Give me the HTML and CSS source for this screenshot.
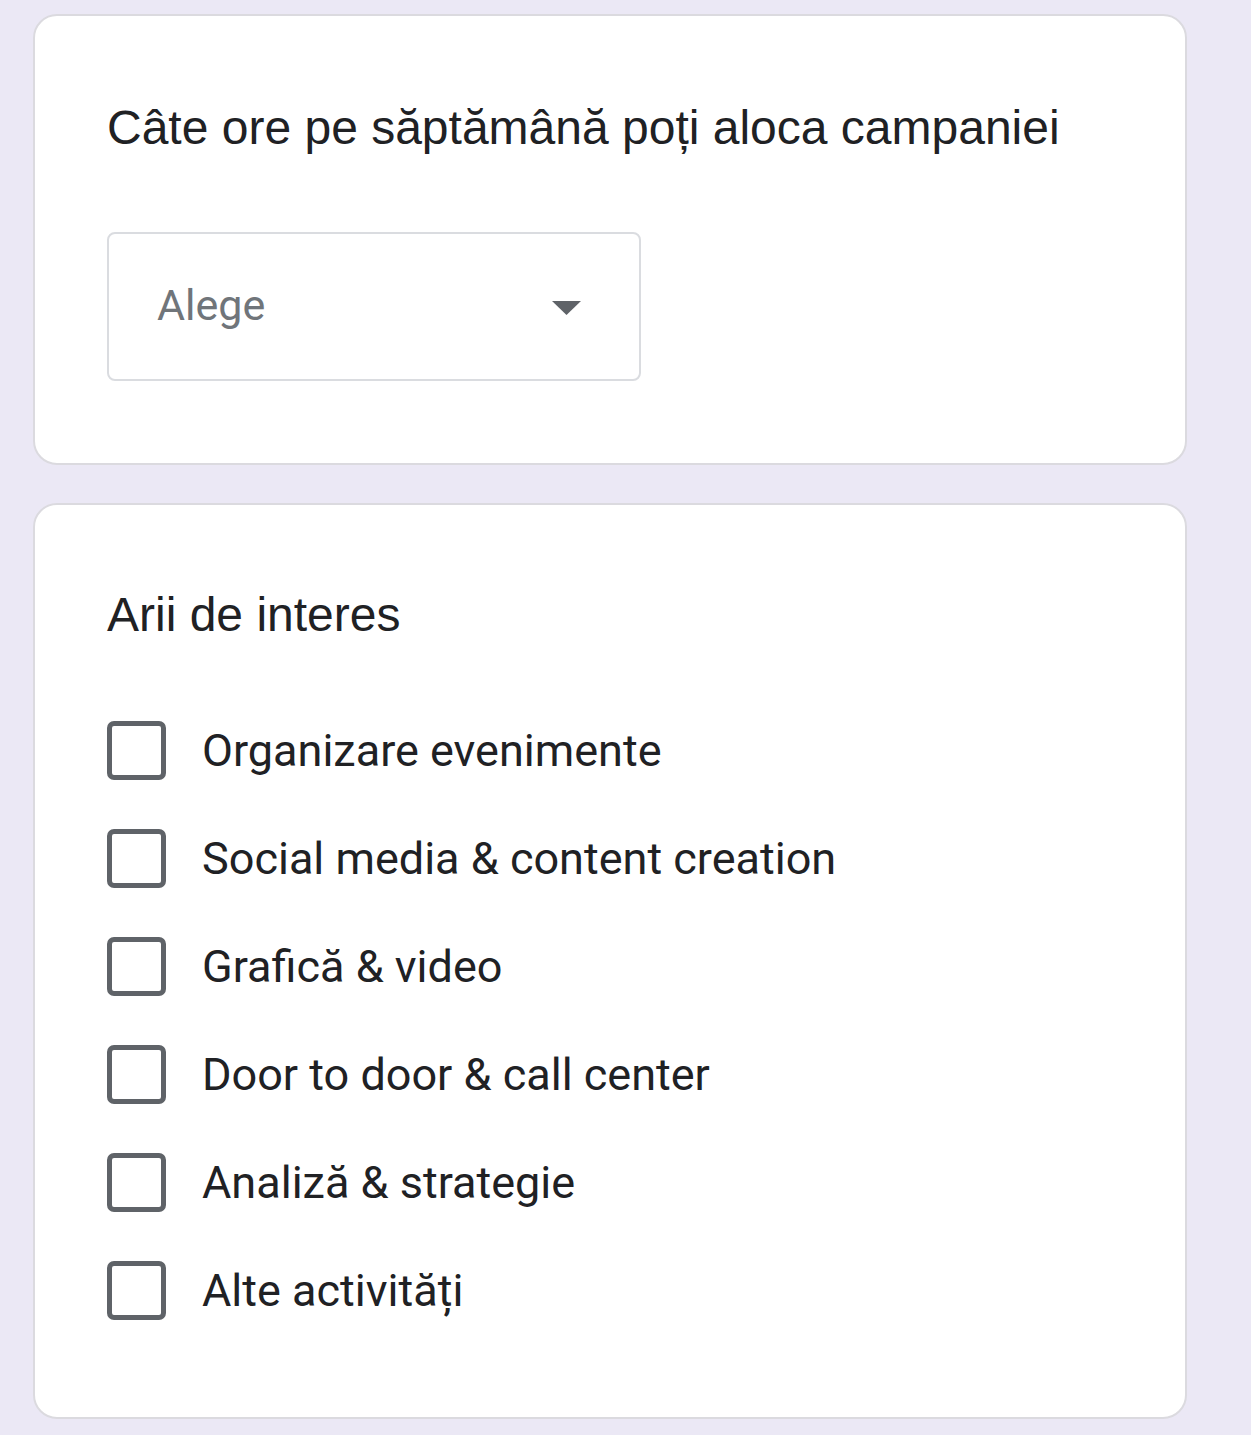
FILE: index.html
```html
<!DOCTYPE html>
<html>
<head>
  <meta charset="UTF-8">
  <link rel="stylesheet" href="styles.css">
  <title>Formular</title>
</head>
<body>
  <div class="form">
    <div class="card card-hours">
      <div class="question">Câte ore pe săptămână poți aloca campaniei</div>
      <div class="select">
        <span class="select-text">Alege</span>
        <svg class="select-arrow" width="29" height="14" viewBox="0 0 29 14">
          <path d="M0 0 L29 0 L14.5 14 Z" fill="#5f6368"/>
        </svg>
      </div>
    </div>

    <div class="card card-areas">
      <div class="question">Arii de interes</div>
      <div class="options">
        <label class="option"><span class="box"></span><span class="option-text">Organizare evenimente</span></label>
        <label class="option"><span class="box"></span><span class="option-text">Social media &amp; content creation</span></label>
        <label class="option"><span class="box"></span><span class="option-text">Grafică &amp; video</span></label>
        <label class="option"><span class="box"></span><span class="option-text">Door to door &amp; call center</span></label>
        <label class="option"><span class="box"></span><span class="option-text">Analiză &amp; strategie</span></label>
        <label class="option"><span class="box"></span><span class="option-text">Alte activități</span></label>
      </div>
    </div>
  </div>
</body>
</html>
```

FILE: styles.css
```css
html,
body {
  margin: 0;
  background: #ebe8f5;
}

.form {
  padding: 14px 0 0 33px;
  display: flex;
  flex-direction: column;
  gap: 38px;
}

.card {
  width: 1154px;
  box-sizing: border-box;
  background: #fff;
  border: 2px solid #dbdadf;
  border-radius: 24px;
  padding: 0 72px;
}

.card-hours {
  padding-top: 82px;
  padding-bottom: 82px;
}

.card-areas {
  padding-top: 80px;
  padding-bottom: 73px;
}

.question {
  font-family: "Liberation Sans", Arial, sans-serif;
  font-size: 48px;
  line-height: 60px;
  color: #202124;
}

.select {
  margin-top: 74px;
  width: 534px;
  height: 149px;
  box-sizing: border-box;
  border: 2px solid #dadce0;
  border-radius: 8px;
  padding: 0 57px 0 48px;
  display: flex;
  align-items: center;
  justify-content: space-between;
}

.select-text {
  font-family: Roboto, sans-serif;
  font-size: 43px;
  color: #70757a;
  margin-top: -3px;
}

.select-arrow {
  margin-top: 2px;
  margin-right: 1px;
}

.options {
  margin-top: 51px;
  display: flex;
  flex-direction: column;
}

.option {
  height: 108px;
  display: flex;
  align-items: center;
  gap: 36px;
}

.box {
  width: 59px;
  height: 59px;
  box-sizing: border-box;
  border: 5px solid #5f6368;
  border-radius: 7px;
  flex: none;
}

.option-text {
  font-family: Roboto, sans-serif;
  font-size: 45px;
  color: #202124;
}
```
